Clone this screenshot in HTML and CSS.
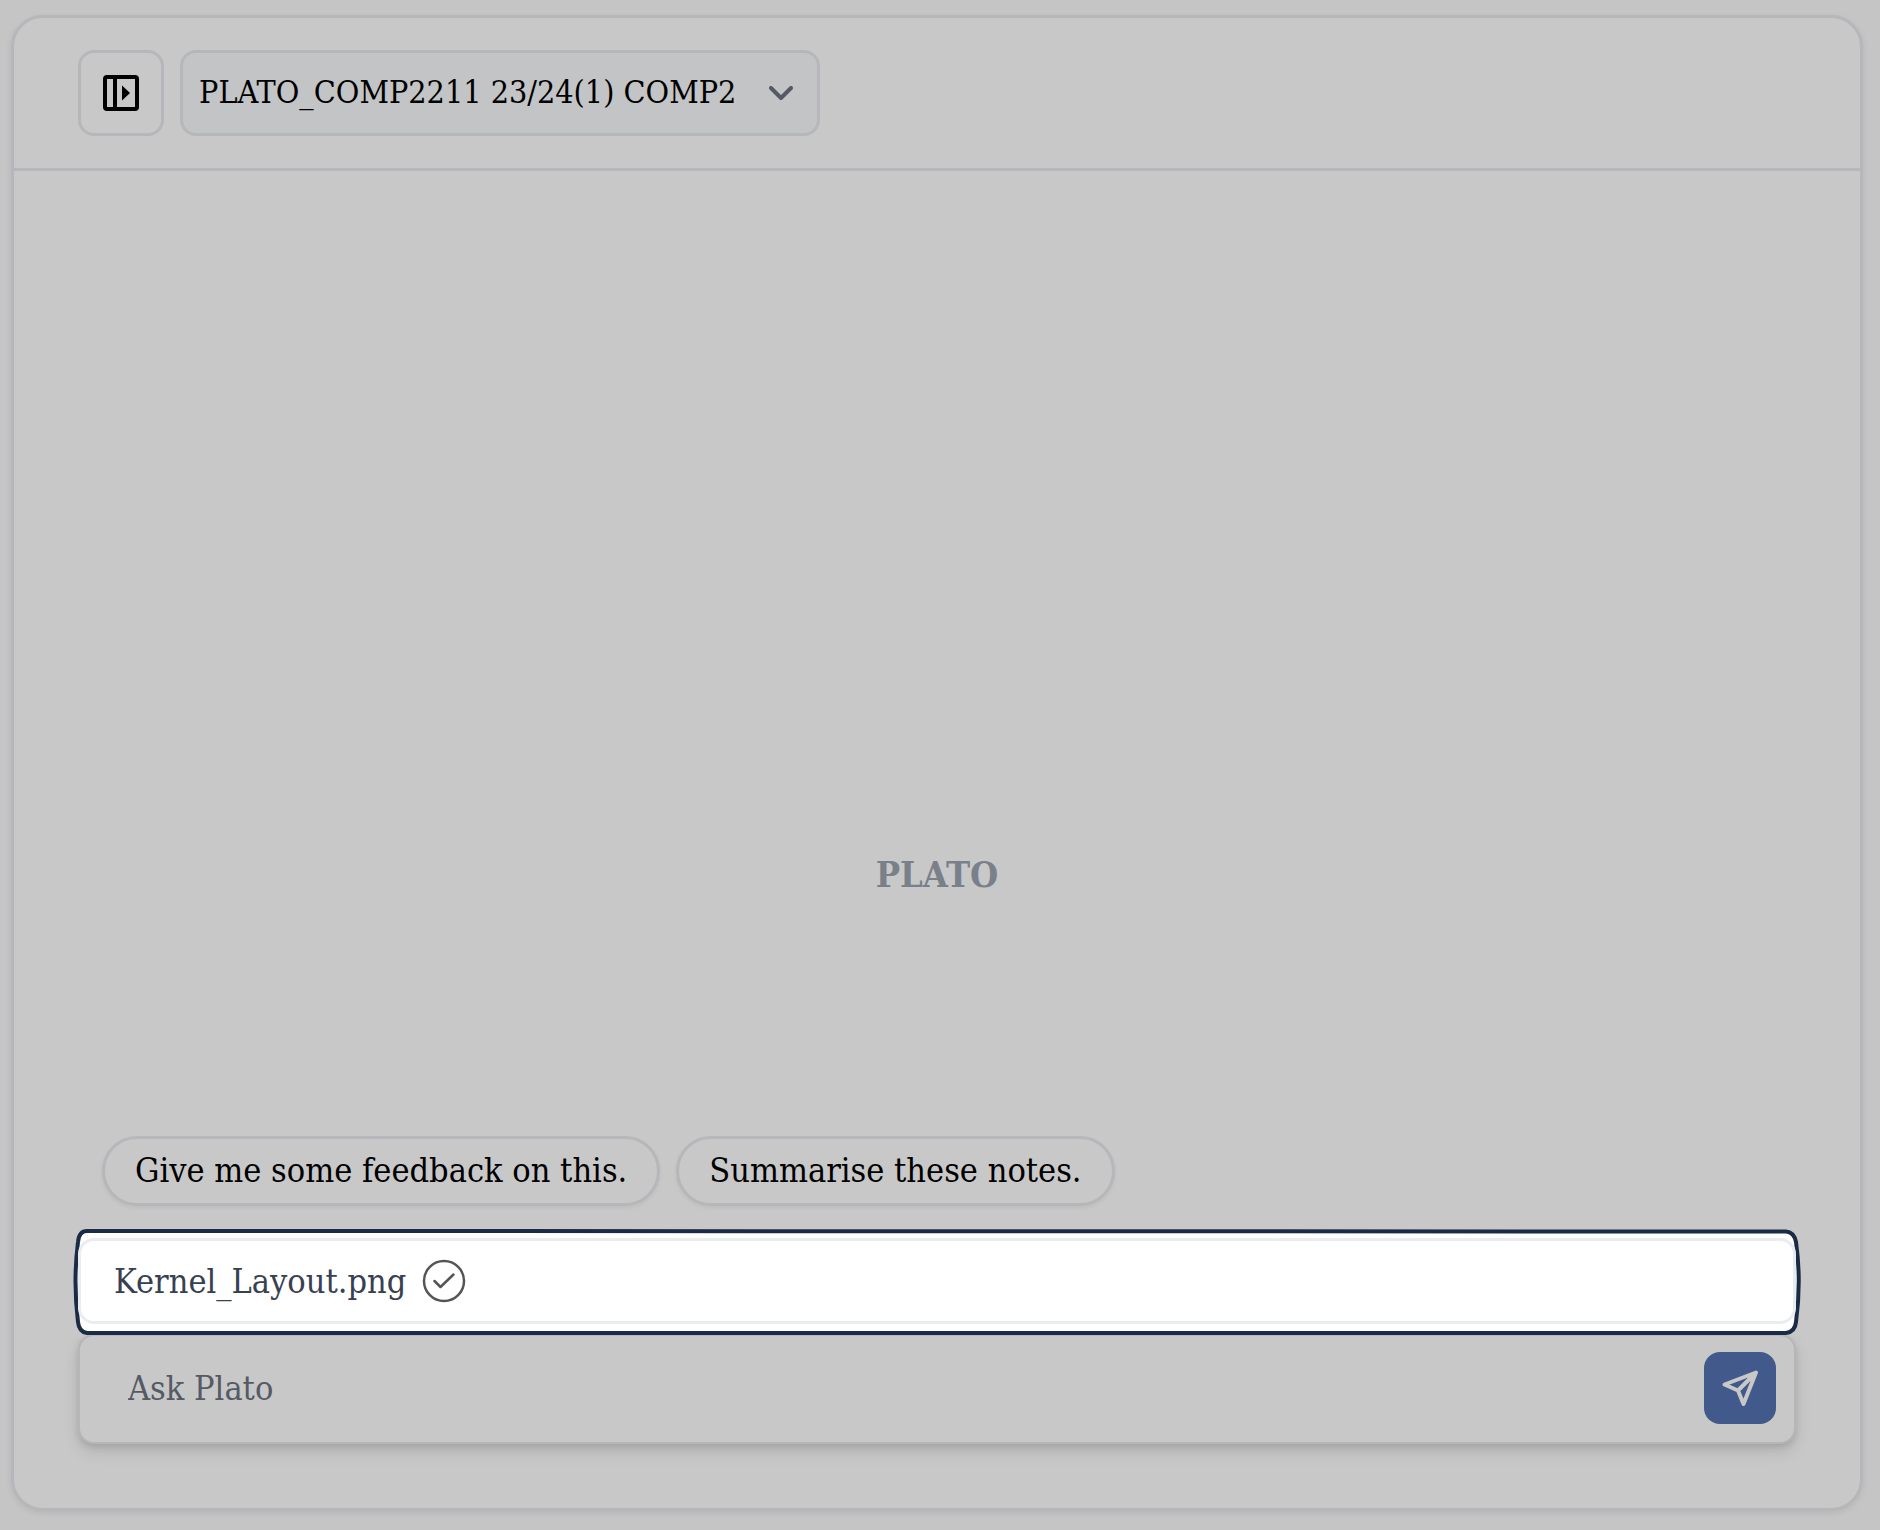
FILE: index.html
```
<!DOCTYPE html>
<html lang="en">
<head>
    <meta charset="UTF-8">
    <meta name="viewport" content="width=device-width, initial-scale=1.0">
    <title>PLATO</title>
    <link rel="stylesheet" href="styles.css">
</head>
<body>
    <div class="chat">
        <header class="chat-header">
            <button type="button" class="panel-button" aria-label="Open sidebar">
                <svg width="36" height="36" viewBox="0 0 36 36" fill="none" stroke="currentColor" stroke-width="4">
                    <rect x="2" y="2" width="32" height="32" rx="2"/>
                    <path d="M12 2v32"/>
                    <path d="M19 10.5v15l8-7.5z" fill="currentColor" stroke="none"/>
                </svg>
            </button>
            <div class="course">
                <select class="course-select" aria-label="Course">
                    <option>PLATO_COMP2211 23/24(1) COMP2</option>
                </select>
                <svg class="course-arrow" width="24" height="14" viewBox="0 0 24 14" fill="none" stroke="currentColor" stroke-width="4" stroke-linecap="round" stroke-linejoin="round">
                    <path d="M2 2l10 10L22 2"/>
                </svg>
            </div>
        </header>

        <main class="chat-body">
            <h1 class="chat-title">PLATO</h1>
        </main>

        <footer class="chat-footer">
            <div class="suggestions">
                <button type="button" class="suggestion">Give me some feedback on this.</button>
                <button type="button" class="suggestion">Summarise these notes.</button>
            </div>

            <div class="file">
                <!-- hand-drawn highlight round the file row -->
                <svg class="file-outline" viewBox="0 0 1734 114" preserveAspectRatio="none" aria-hidden="true">
                    <path d="M17 7 Q867 6 1716 7.5 Q1724 8 1726 18 Q1731.5 57 1726 98 Q1725 108 1716 109 Q867 110.5 17 109 Q9 108 8 98 Q3 57 8 18 Q9 7 17 7z"/>
                </svg>
                <div class="file-box">
                    <span class="file-name">Kernel_Layout.png</span>
                    <svg width="44" height="44" viewBox="0 0 44 44" fill="none" stroke="#555" stroke-width="2.5" stroke-linecap="round" stroke-linejoin="round">
                        <circle cx="22" cy="22" r="20"/>
                        <path d="M12.5 22l6 6 13-12.500"/>
                    </svg>
                </div>
            </div>

            <form class="ask">
                <input type="text" class="ask-input" placeholder="Ask Plato" aria-label="Ask Plato">
                <button type="submit" class="send-button" aria-label="Send">
                    <svg width="72" height="72" viewBox="0 0 72 72" fill="none" stroke="currentColor" stroke-width="4" stroke-linecap="round" stroke-linejoin="round">
                        <path d="M52 20.5L20.5 32.5l13.5 6 5.5 13.5zM52 20.5L34 38.5"/>
                    </svg>
                </button>
            </form>
        </footer>
    </div>
</body>
</html>
```
FILE: styles.css
```
* {
    box-sizing: border-box;
}
body {
    margin: 0;
    min-height: 100vh;
    padding: 15px 17px 19px 11px;
    display: flex;
    background-color: #c5c5c5;
    font-family: "DejaVu Serif Condensed", "DejaVu Serif", serif;
    font-size: 34px;
    line-height: 40px;
    color: #000;
}
button, input, select {
    font: inherit;
    color: inherit;
    margin: 0;
}
svg {
    display: block;
    flex: none;
}
.chat {
    flex: 1;
    display: flex;
    flex-direction: column;
    border: 3px solid #b7b7bb;
    border-radius: 32px;
    background-color: #c8c8c8;
    box-shadow: 0 2px 6px rgba(0, 0, 0, 0.08);
}
.chat-header {
    display: flex;
    gap: 16px;
    padding: 32px 64px;
    border-bottom: 3px solid #b7b7bb;
}
.panel-button {
    display: flex;
    align-items: center;
    justify-content: center;
    width: 86px;
    height: 86px;
    padding: 0;
    border: 3px solid #b7b7bb;
    border-radius: 16px;
    background: none;
}
.course {
    position: relative;
    width: 640px;
}
.course-select {
    appearance: none;
    width: 100%;
    height: 86px;
    padding: 0 64px 2px 16px;
    border: 3px solid #b6b7ba;
    border-radius: 16px;
    background-color: #c3c4c6;
    font-size: 32px;
}
.course-arrow {
    position: absolute;
    top: 36px;
    right: 27px;
    color: #545966;
    pointer-events: none;
}
.chat-body {
    flex: 1;
    display: flex;
    align-items: flex-end;
    justify-content: center;
    padding-bottom: 242px;
}
.chat-title {
    margin: 0;
    font-size: 36px;
    font-weight: bold;
    color: #7a808a;
}
.chat-footer {
    padding: 0 64px 64px;
}
.suggestions {
    display: flex;
    gap: 16px;
    padding: 0 24px;
    margin-bottom: 32px;
}
.suggestion {
    height: 70px;
    padding: 0 30px 2px;
    border: 3px solid #b7b7bb;
    border-radius: 35px;
    background-color: #c8c8c8;
    box-shadow: 0 2px 4px rgba(0, 0, 0, 0.06);
}
.file {
    position: relative;
    z-index: 1;
    margin-bottom: 10px;
}
.file-outline {
    position: absolute;
    top: -14px;
    left: -8px;
    width: calc(100% + 16px);
    height: 114px;
    fill: #fff;
    stroke: #1c2b45;
    stroke-width: 4px;
}
.file-box {
    position: relative;
    display: flex;
    align-items: center;
    gap: 16px;
    height: 86px;
    padding: 0 33px;
    border: 3px solid #e9edf1;
    border-radius: 16px;
    color: #374151;
}
.ask {
    display: flex;
    align-items: center;
    height: 110px;
    padding: 0 18px 2px 48px;
    border: 2px solid #b5b5ba;
    border-radius: 16px;
    background-color: #c8c8c8;
    box-shadow: 0 8px 16px rgba(0, 0, 0, 0.1), 0 3px 6px rgba(0, 0, 0, 0.1);
}
.ask-input {
    flex: 1;
    min-width: 0;
    height: 72px;
    padding: 0;
    border: none;
    outline: none;
    background: none;
}
.ask-input::placeholder {
    color: #555a64;
    opacity: 1;
}
.send-button {
    width: 72px;
    height: 72px;
    padding: 0;
    border: none;
    border-radius: 16px;
    background-color: #41598b;
    color: #c8c8c8;
}
```
